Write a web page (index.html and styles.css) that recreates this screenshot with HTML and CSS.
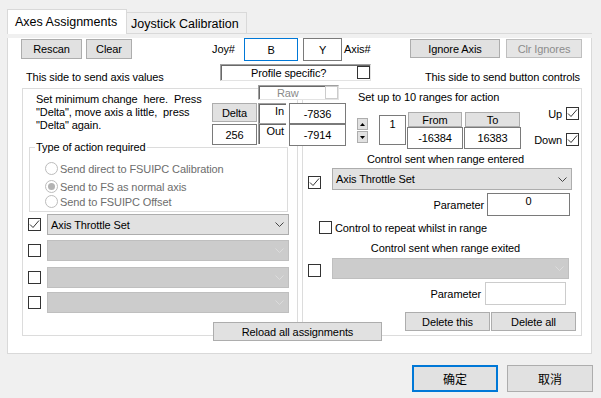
FILE: index.html
```html
<!DOCTYPE html>
<html>
<head>
<meta charset="utf-8">
<link rel="stylesheet" href="styles.css">
</head>
<body>
<div class="dialog">
  <div class="tabs">
    <div class="tab tab-active">Axes Assignments</div>
    <div class="tab tab-idle">Joystick Calibration</div>
    <div class="tab-fill"></div>
  </div>
  <div class="pane">
    <div class="toprow">
      <div class="btn rescan">Rescan</div>
      <div class="btn clear">Clear</div>
      <span class="lbl joy">Joy#</span>
      <div class="field focus joybox">B</div>
      <div class="field axisbox">Y</div>
      <span class="lbl axislbl">Axis#</span>
      <div class="btn ignore">Ignore Axis</div>
      <div class="btn clr disabled">Clr Ignores</div>
    </div>
    <div class="siderow">
      <span class="sidelbl leftside">This side to send axis values</span>
      <div class="sunken profile"><span class="profile-text">Profile specific?</span><span class="cb"></span></div>
      <span class="sidelbl rightside">This side to send button controls</span>
    </div>
    <div class="panels">
      <div class="panel panel-left">
        <p class="desc">Set minimum change  here.  Press
"Delta", move axis a little,  press
"Delta" again.</p>
        <div class="group">
          <span class="legend">Type of action required</span>
          <div class="radio r1"><span class="dot"></span><span>Send direct to FSUIPC Calibration</span></div>
          <div class="radio r2"><span class="dot on"></span><span>Send to FS as normal axis</span></div>
          <div class="radio r3"><span class="dot"></span><span>Send to FSUIPC Offset</span></div>
        </div>
        <div class="crow c1">
          <span class="cb checked"><svg width="11" height="11" viewBox="0 0 11 11"><path d="M1 5.5 L4 8.5 L10 1.5" fill="none" stroke="#333" stroke-width="1"/></svg></span>
          <div class="combo wide">Axis Throttle Set<svg class="chev" width="9" height="5" viewBox="0 0 9 5"><path d="M0.5 0.5 L4.5 4.5 L8.5 0.5" fill="none" stroke="#444" stroke-width="1"/></svg></div>
        </div>
        <div class="crow c2">
          <span class="cb"></span>
          <div class="combo wide off"><svg class="chev" width="9" height="5" viewBox="0 0 9 5"><path d="M0.5 0.5 L4.5 4.5 L8.5 0.5" fill="none" stroke="#dcdcdc" stroke-width="1"/></svg></div>
        </div>
        <div class="crow c3">
          <span class="cb"></span>
          <div class="combo wide off"><svg class="chev" width="9" height="5" viewBox="0 0 9 5"><path d="M0.5 0.5 L4.5 4.5 L8.5 0.5" fill="none" stroke="#dcdcdc" stroke-width="1"/></svg></div>
        </div>
        <div class="crow c4">
          <span class="cb"></span>
          <div class="combo wide off"><svg class="chev" width="9" height="5" viewBox="0 0 9 5"><path d="M0.5 0.5 L4.5 4.5 L8.5 0.5" fill="none" stroke="#dcdcdc" stroke-width="1"/></svg></div>
        </div>
      </div>
      <div class="panel panel-right">
        <p class="rtitle">Set up to 10 ranges for action</p>
        <div class="ranges">
          <div class="spinner">
            <span class="spin"><svg width="5" height="3" viewBox="0 0 5 3"><path d="M2.5 0 L5 3 L0 3 Z" fill="#000"/></svg></span>
            <span class="spin"><svg width="5" height="3" viewBox="0 0 5 3"><path d="M0 0 L5 0 L2.5 3 Z" fill="#000"/></svg></span>
          </div>
          <div class="field idx">1</div>
          <div class="rcol from">
            <div class="rhead">From</div>
            <div class="field rval">-16384</div>
          </div>
          <div class="rcol to">
            <div class="rhead">To</div>
            <div class="field rval">16383</div>
          </div>
          <div class="updown">
            <div class="ud"><span>Up</span><span class="cb checked"><svg width="11" height="11" viewBox="0 0 11 11"><path d="M1 5.5 L4 8.5 L10 1.5" fill="none" stroke="#333" stroke-width="1"/></svg></span></div>
            <div class="ud down"><span>Down</span><span class="cb checked"><svg width="11" height="11" viewBox="0 0 11 11"><path d="M1 5.5 L4 8.5 L10 1.5" fill="none" stroke="#333" stroke-width="1"/></svg></span></div>
          </div>
        </div>
        <p class="ctitle entered">Control sent when range entered</p>
        <div class="erow">
          <span class="cb checked"><svg width="11" height="11" viewBox="0 0 11 11"><path d="M1 5.5 L4 8.5 L10 1.5" fill="none" stroke="#333" stroke-width="1"/></svg></span>
          <div class="combo rcombo">Axis Throttle Set<svg class="chev" width="9" height="5" viewBox="0 0 9 5"><path d="M0.5 0.5 L4.5 4.5 L8.5 0.5" fill="none" stroke="#444" stroke-width="1"/></svg></div>
        </div>
        <div class="prow p1">
          <span class="plbl">Parameter</span>
          <div class="field pbox">0</div>
        </div>
        <div class="repeat">
          <span class="cb"></span>
          <span class="rtext">Control to repeat whilst in range</span>
        </div>
        <p class="ctitle exited">Control sent when range exited</p>
        <div class="xrow">
          <span class="cb"></span>
          <div class="combo xcombo off"><svg class="chev" width="9" height="5" viewBox="0 0 9 5"><path d="M0.5 0.5 L4.5 4.5 L8.5 0.5" fill="none" stroke="#dcdcdc" stroke-width="1"/></svg></div>
        </div>
        <div class="prow p2">
          <span class="plbl">Parameter</span>
          <div class="field pbox2"></div>
        </div>
        <div class="delrow">
          <div class="btn del">Delete this</div>
          <div class="btn del">Delete all</div>
        </div>
      </div>
      <div class="cluster">
        <div class="sunken raw"><span class="raw-text">Raw</span><span class="cb light"></span></div>
        <div class="dgrid">
          <div class="dcol c-delta">
            <div class="btn delta">Delta</div>
            <div class="field dval">256</div>
          </div>
          <div class="dcol c-io">
            <div class="io">In</div>
            <div class="io out">Out</div>
          </div>
          <div class="dcol c-val">
            <div class="field vin">-7836</div>
            <div class="field vout">-7914</div>
          </div>
        </div>
      </div>
      <div class="btn reload">Reload all assignments</div>
    </div>
  </div>
  <div class="footer">
    <div class="btn ok">确定</div>
    <div class="btn cancel">取消</div>
  </div>
</div>
</body>
</html>
```
FILE: styles.css
```css
* { box-sizing: border-box; margin: 0; padding: 0; }
html, body { width: 601px; height: 398px; overflow: hidden; }
body {
  background: #f0f0f0;
  font-family: "Liberation Sans", Arial, sans-serif;
  font-size: 11px;
  letter-spacing: -0.1px;
  color: #000;
}
.dialog { padding: 9px 0 0 7px; }

/* tabs */
.tabs { display: flex; align-items: flex-end; height: 25px; width: 585px; }
.tab { font-size: 12.5px; letter-spacing: 0; line-height: 16px; white-space: nowrap; }
.tab-active {
  width: 120px; height: 25px; background: #fff;
  border: 1px solid #d9d9d9; border-bottom: 0;
  padding: 4px 0 0 7px;
}
.tab-idle {
  width: 120px; height: 22px;
  border: 1px solid #d9d9d9; border-left: 0;
  padding: 3px 0 0 4px;
}
.tab-fill { flex: 1; border-bottom: 1px solid #d9d9d9; }

.pane {
  width: 585px; height: 316px; background: #fff;
  border: 1px solid #d9d9d9; border-top: 0;
}

/* generic controls */
.btn {
  display: flex; align-items: center; justify-content: center;
  background: #e1e1e1; border: 1px solid #adadad; white-space: nowrap;
}
.btn.disabled { color: #8c8c8c; border-color: #bfbfbf; background: #e5e5e5; }
.field {
  display: flex; align-items: center; justify-content: center;
  background: #fff; border: 1px solid #7a7a7a;
}
.cb {
  display: inline-flex; align-items: center; justify-content: center;
  width: 13px; height: 13px; border: 1px solid #333; background: #fff; flex: none;
}
.cb.light { border-color: #cccccc; }
.sunken {
  border: 1px solid; border-color: #a0a0a0 #e3e3e3 #e3e3e3 #a0a0a0;
  box-shadow: inset 1px 1px 0 #696969;
  background: #fff;
}
.combo {
  display: flex; align-items: center;
  background: #e1e1e1; border: 1px solid #adadad;
  padding-left: 3px; white-space: nowrap;
}
.combo .chev { margin-left: auto; margin-right: 4px; }
.combo.off { background: #cccccc; border-color: #bfbfbf; }

/* top row */
.toprow { display: flex; align-items: flex-start; margin-top: 4px; height: 23px; }
.rescan { margin: 1px 0 0 13px; width: 61px; height: 20px; }
.clear { margin: 1px 0 0 4px; width: 46px; height: 20px; }
.lbl { line-height: 23px; }
.joy { margin-left: 80px; width: 32px; }
.joybox { width: 54px; height: 23px; border-color: #0078d7; }
.axisbox { margin-left: 5px; width: 39px; height: 23px; }
.axislbl { margin-left: 2px; width: 66px; }
.ignore { margin-top: 1px; width: 90px; height: 19px; }
.clr { margin: 1px 0 0 6px; width: 76px; height: 19px; }

/* side labels row */
.siderow { display: flex; align-items: flex-start; margin-top: 3px; height: 20px; }
.sidelbl { line-height: 13px; margin-top: 7px; white-space: nowrap; }
.leftside { margin-left: 18px; width: 194px; }
.profile { display: flex; align-items: center; width: 151px; height: 17px; }
.profile-text { padding-left: 30px; }
.profile .cb { margin-left: auto; margin-right: 0; }
.rightside { flex: 1; text-align: right; padding-right: 11px; }

/* panels */
.panels { position: relative; display: flex; gap: 4px; margin: 4px 0 0 14px; height: 248px; }
.panel { border: 1px solid #dcdcdc; height: 248px; background: #fff; }
.panel-left { width: 276px; }
.panel-right { width: 280px; }

.desc { margin-top: 4px; padding-left: 13px; line-height: 13px; white-space: pre; }

.group { margin: 15px 0 0 6px; width: 259px; height: 65px; border: 1px solid #dcdcdc; }
.legend {
  display: block; width: fit-content; margin: -7px 0 0 5px; padding: 0 1px;
  background: #fff; line-height: 13px;
}
.radio { display: flex; align-items: center; height: 15px; color: #6d6d6d; }
.radio .dot {
  width: 13px; height: 13px; border-radius: 50%; border: 1px solid #bcbcbc;
  margin: 0 2px 0 15px; display: flex; align-items: center; justify-content: center; flex: none;
}
.radio .dot.on::after { content: ""; width: 7px; height: 7px; border-radius: 50%; background: #b3b3b3; }
.r1 { margin-top: 7px; }
.r2 { margin-top: 3px; }

.crow { display: flex; align-items: center; height: 21px; }
.crow .cb { margin-left: 5px; }
.combo.wide { margin-left: 6px; width: 242px; height: 21px; }
.c1 { margin-top: 2px; }
.c2 { margin-top: 5px; }
.c3 { margin-top: 6px; }
.c4 { margin-top: 4px; }

/* right panel */
.rtitle { margin-top: 2px; padding-left: 55px; line-height: 13px; }
.ranges { display: flex; align-items: flex-start; margin-top: 3px; height: 43px; }
.spinner { display: flex; flex-direction: column; gap: 1px; margin: 11px 0 0 54px; width: 11px; }
.spin {
  height: 12px; background: #e1e1e1; border: 1px solid #adadad;
  display: flex; align-items: center; justify-content: center;
}
.idx { margin: 8px 0 0 11px; width: 27px; height: 30px; align-items: flex-start; padding-top: 2px; }
.rcol { margin-left: 1px; display: flex; flex-direction: column; }
.from { width: 56px; }
.to { width: 57px; }
.rhead {
  margin: 5px 1px 0; height: 15px; background: #e1e1e1; border: 1px solid #adadad;
  display: flex; align-items: center; justify-content: center;
}
.rval { height: 22px; }
.updown { margin-left: auto; margin-right: 2px; display: flex; flex-direction: column; align-items: flex-end; }
.ud { display: flex; align-items: center; height: 13px; }
.ud span:first-child { margin-right: 4px; }
.ud.down { margin-top: 13px; }

.ctitle { line-height: 13px; text-align: center; padding-left: 7px; }
.entered { margin-top: 3px; }
.erow { display: flex; align-items: flex-start; margin-top: 2px; height: 22px; }
.erow .cb { margin: 8px 0 0 5px; }
.rcombo { margin-left: 11px; width: 240px; height: 22px; }

.prow { display: flex; align-items: center; justify-content: flex-end; height: 23px; }
.p1 { margin-top: 3px; }
.p1 .plbl { margin-right: 3px; }
.pbox { width: 83px; height: 23px; margin-right: 11px; align-items: flex-start; padding-top: 1px; }
.p2 { margin-top: 3px; }
.p2 .plbl { margin-right: 4px; }
.pbox2 { width: 81px; height: 23px; margin-right: 15px; border-color: #cccccc; }

.repeat { display: flex; align-items: center; margin-top: 5px; height: 13px; }
.repeat .cb { margin-left: 16px; }
.rtext { margin-left: 3px; }
.exited { margin-top: 8px; }

.xrow { display: flex; align-items: flex-start; margin-top: 3px; height: 21px; }
.xrow .cb { margin: 6px 0 0 5px; }
.xcombo { margin-left: 11px; width: 237px; height: 21px; }

.delrow { display: flex; justify-content: flex-end; gap: 1px; margin: 7px 5px 0 0; }
.del { width: 85px; height: 19px; }

/* overlays across both panels */
.cluster { position: absolute; left: 190px; top: -3px; }
.raw { display: flex; align-items: center; margin-left: 46px; width: 81px; height: 15px; }
.raw-text { color: #8a8a8a; padding-left: 18px; }
.raw .cb { margin-left: auto; }
.dgrid { display: flex; margin-top: 3px; }
.dcol { display: flex; flex-direction: column; }
.c-delta { width: 45px; }
.delta { height: 19px; }
.dval { margin-top: 2px; height: 21px; }
.c-io { margin-left: 1px; width: 28px; }
.io {
  height: 20px; text-align: right; padding: 1px 2px 0 0; line-height: 13px;
  border-top: 1px solid #a0a0a0; border-left: 1px solid #a0a0a0;
  box-shadow: inset 1px 1px 0 #696969; background: #fff;
}
.io.out { height: 21px; }
.c-val { margin-left: 3px; width: 57px; }
.vin { height: 21px; }
.vout { height: 22px; }
.reload { position: absolute; left: 191px; top: 234px; width: 169px; height: 19px; }

/* footer */
.footer { display: flex; justify-content: flex-end; gap: 9px; margin-top: 11px; padding-right: 8px; }
.ok, .cancel {
  width: 86px; height: 27px;
  font-family: "Noto Sans CJK SC", "Liberation Sans", sans-serif; font-size: 12px; letter-spacing: 0;
}
.ok { border: 2px solid #0078d7; }
```
